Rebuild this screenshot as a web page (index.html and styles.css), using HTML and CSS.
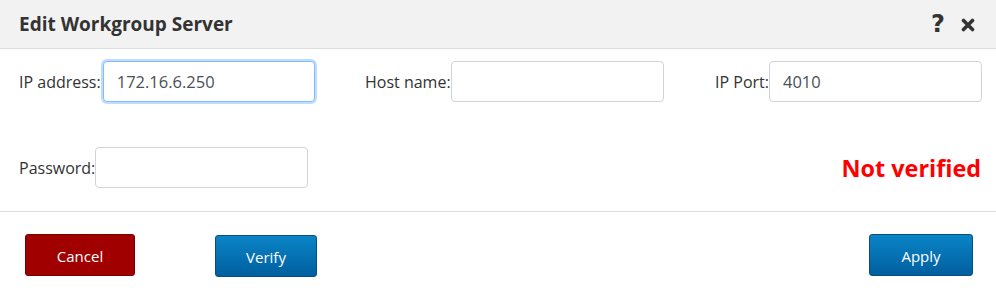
FILE: index.html
```html
<!DOCTYPE html>
<html>
<head>
<meta charset="utf-8">
<link rel="stylesheet" href="styles.css">
</head>
<body>
<div class="dialog">
  <div class="header">
    <div class="title">Edit Workgroup Server</div>
    <div class="tools">
      <span class="help">?</span>
      <svg class="close" width="14" height="14" viewBox="0 0 14 14"><path d="M2.5 2.5 L11.5 11.5 M11.5 2.5 L2.5 11.5" stroke="#333" stroke-width="3.6" stroke-linecap="round"/></svg>
    </div>
  </div>
  <div class="form">
    <div class="row">
      <div class="field c1"><label>IP address:</label><input class="inp focus" value="172.16.6.250"></div>
      <div class="field c2"><label>Host name:</label><input class="inp" value=""></div>
      <div class="field c3"><label>IP Port:</label><input class="inp" value="4010"></div>
    </div>
    <div class="row row2">
      <div class="field c1"><label>Password:</label><input class="inp" type="password" value=""></div>
      <div class="status">Not verified</div>
    </div>
  </div>
  <div class="footer">
    <button class="btn cancel">Cancel</button>
    <button class="btn blue verify">Verify</button>
    <div class="spacer"></div>
    <button class="btn blue apply">Apply</button>
  </div>
</div>
</body>
</html>
```

FILE: styles.css
```css
* { box-sizing: border-box; }
html, body { margin: 0; padding: 0; background: #fff; }
body { font-family: "Open Sans", "Noto Sans", sans-serif; color: #333; width: 996px; height: 299px; overflow: hidden; }
.header {
  height: 49px;
  background: #f2f2f2;
  border-bottom: 1px solid #dcdcdc;
  display: flex;
  align-items: center;
  padding: 0 19px 1px 19px;
}
.title { font-size: 19px; font-weight: 700; color: #333; flex: 1; }
.tools { display: flex; align-items: center; gap: 16px; padding-right: 2px; }
.help { font-family: "DejaVu Sans", sans-serif; font-weight: 700; font-size: 24px; line-height: 1; color: #333; }
.close { display: block; margin-top: 3px; }
.form {
  padding: 12px 14px 0 19px;
  height: 163px;
  border-bottom: 1px solid #dcdcdc;
}
.row { display: flex; align-items: center; height: 41px; }
.row2 { margin-top: 45px; }
.field { display: flex; align-items: center; }
.c1 { width: 346px; }
.c2 { width: 350px; }
.c3 { flex: 1; }
label { font-size: 16px; color: #333; white-space: nowrap; }
.c1 .focus { margin-left: 2px; width: 212px; }
.inp {
  width: 213px;
  height: 41px;
  border: 1px solid #ced4da;
  border-radius: 4px;
  padding: 0 13px;
  font-family: inherit;
  font-size: 16.5px;
  color: #495057;
  outline: none;
  background: #fff;
}
.focus { border-color: #80bdff; box-shadow: 0 0 0 2px rgba(0,123,255,.25); }
.status {
  margin-left: auto;
  color: #ff0000;
  font-weight: 700;
  font-size: 23.4px;
  padding-right: 1px;
}
.footer {
  display: flex;
  align-items: flex-start;
  padding: 22px 23px 0 25px;
}
.spacer { flex: 1; }
.btn {
  height: 42px;
  border-radius: 3px;
  font-family: inherit;
  font-size: 15px;
  color: #fff;
  cursor: pointer;
  padding-top: 3px;
}
.cancel { width: 110px; background: #a00000; border: 1px solid #7a0000; }
.blue {
  background: linear-gradient(#0a84c6, #005f9f);
  border: 1px solid #0b4d7c;
}
.verify { width: 102px; margin-left: 80px; margin-top: 1px; }
.apply { width: 104px; }
```
